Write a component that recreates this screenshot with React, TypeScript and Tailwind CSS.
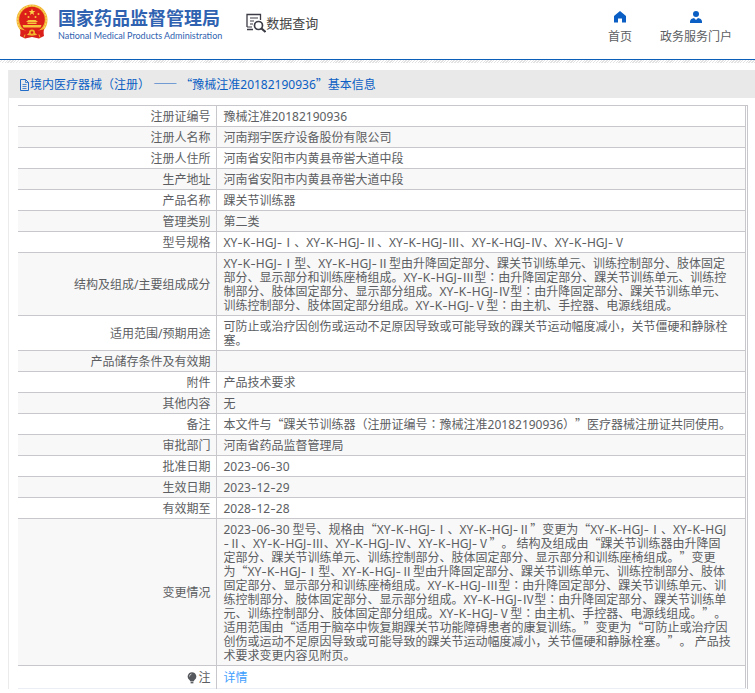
import { Fragment } from "react";
import type { ReactNode } from "react";

const structure = `XY-K-HGJ-Ⅰ型、XY-K-HGJ-Ⅱ型由升降固定部分、踝关节训练单元、训练控制部分、肢体固定
部分、显示部分和训练座椅组成。XY-K-HGJ-Ⅲ型：由升降固定部分、踝关节训练单元、训练控
制部分、肢体固定部分、显示部分组成。XY-K-HGJ-Ⅳ型：由升降固定部分、踝关节训练单元、
训练控制部分、肢体固定部分组成。XY-K-HGJ-Ⅴ型：由主机、手控器、电源线组成。`;

const changes = `2023-06-30 型号、规格由“XY-K-HGJ-Ⅰ、XY-K-HGJ-Ⅱ”变更为“XY-K-HGJ-Ⅰ、XY-K-HGJ
-Ⅱ、XY-K-HGJ-Ⅲ、XY-K-HGJ-Ⅳ、XY-K-HGJ-Ⅴ”。 结构及组成由“踝关节训练器由升降固
定部分、踝关节训练单元、训练控制部分、肢体固定部分、显示部分和训练座椅组成。”变更
为“XY-K-HGJ-Ⅰ型、XY-K-HGJ-Ⅱ型由升降固定部分、踝关节训练单元、训练控制部分、肢体
固定部分、显示部分和训练座椅组成。XY-K-HGJ-Ⅲ型：由升降固定部分、踝关节训练单元、训
练控制部分、肢体固定部分、显示部分组成。XY-K-HGJ-Ⅳ型：由升降固定部分、踝关节训练单
元、训练控制部分、肢体固定部分组成。XY-K-HGJ-Ⅴ型：由主机、手控器、电源线组成。”。
适用范围由“适用于脑卒中恢复期踝关节功能障碍患者的康复训练。”变更为“可防止或治疗因
创伤或运动不足原因导致或可能导致的踝关节运动幅度减小，关节僵硬和静脉栓塞。”。 产品技
术要求变更内容见附页。`;

const rows = [
  { label: "注册证编号", value: "豫械注准20182190936" },
  { label: "注册人名称", value: "河南翔宇医疗设备股份有限公司" },
  { label: "注册人住所", value: "河南省安阳市内黄县帝喾大道中段" },
  { label: "生产地址", value: "河南省安阳市内黄县帝喾大道中段" },
  { label: "产品名称", value: "踝关节训练器" },
  { label: "管理类别", value: "第二类" },
  { label: "型号规格", value: "XY-K-HGJ-Ⅰ、XY-K-HGJ-Ⅱ、XY-K-HGJ-Ⅲ、XY-K-HGJ-Ⅳ、XY-K-HGJ-Ⅴ" },
  { label: "结构及组成/主要组成成分", value: structure },
  {
    label: "适用范围/预期用途",
    value: "可防止或治疗因创伤或运动不足原因导致或可能导致的踝关节运动幅度减小，关节僵硬和静脉栓塞。",
  },
  { label: "产品储存条件及有效期", value: "" },
  { label: "附件", value: "产品技术要求" },
  { label: "其他内容", value: "无" },
  { label: "备注", value: "本文件与“踝关节训练器（注册证编号：豫械注准20182190936）”医疗器械注册证共同使用。" },
  { label: "审批部门", value: "河南省药品监督管理局" },
  { label: "批准日期", value: "2023-06-30" },
  { label: "生效日期", value: "2023-12-29" },
  { label: "有效期至", value: "2028-12-28" },
  { label: "变更情况", value: changes },
];

function Glyph({ text }: { text: string }) {
  if (text === "-") {
    return <span className="font-['Inter',sans-serif] leading-none">{text}</span>;
  }
  // zh-Hant centres the colon in its box
  if (text === "：") {
    return <span lang="zh-Hant" className="font-['Noto_Sans_CJK_TC',sans-serif] leading-none">{text}</span>;
  }
  return <span className="font-['Noto_Sans_CJK_SC',sans-serif] leading-none">{text}</span>;
}

// Quotes, dashes and roman numerals take the full-width CJK glyphs
function Mixed({ text }: { text: string }) {
  return (
    <>
      {text.split(/([“”—Ⅰ-Ⅴ]+|：|-)/).map((part, i) =>
        i % 2 ? <Glyph key={i} text={part} /> : <Fragment key={i}>{part}</Fragment>
      )}
    </>
  );
}

function Emblem() {
  return (
    <svg viewBox="0 0 32 36" className="h-9 w-8 shrink-0" aria-hidden="true">
      <path d="M5 25 L4 32 L9 34.500 L16 33 L23 34.500 L28 32 L27 25Z" fill="#d8201c" />
      <circle cx="16" cy="16" r="15.500" fill="#f2b632" />
      <circle cx="16" cy="16" r="14.300" fill="none" stroke="#fbe07a" strokeWidth=".8" strokeDasharray="2 1.200" />
      <circle cx="16" cy="15.500" r="12.800" fill="#dd1f1a" />
      <path d="M16 4.600l.9 2.300 2.400.1-1.900 1.500.7 2.400-2.100-1.400-2.100 1.400.7-2.400-1.900-1.500 2.400-.1z" fill="#fbd34a" />
      <g fill="#f8c63c">
        <circle cx="9.500" cy="10" r="1" />
        <circle cx="22.500" cy="10" r="1" />
        <circle cx="12.500" cy="13" r="1" />
        <circle cx="19.500" cy="13" r="1" />
        <path d="M10 18l2.500-2h7l2.500 2zM11.500 18.500h9v1.500h-9zM6.500 21h19l-1 2.500h-17z" />
      </g>
      <path d="M4 25c4 1.500 8 2 12 2s8-.5 12-2l-1 5-5 1.500-3-2.500h-6l-3 2.500-5-1.500z" fill="#dd1f1a" />
      <circle cx="16" cy="28.500" r="3" fill="#f0b429" />
      <circle cx="16" cy="28.500" r="1.300" fill="#dd1f1a" />
      <path d="M9 30.500l-1 3M23 30.500l1 3" stroke="#f0b429" strokeWidth="1" />
    </svg>
  );
}

function QueryIcon() {
  return (
    <svg viewBox="0 0 20 20" className="size-5 shrink-0" fill="none" stroke="#3c3c46" aria-hidden="true">
      <path d="M14.500 7V1.500H1V5M1 5v9M1 16.500h6" strokeWidth="1.300" />
      <path d="M1 14h5M4 5h8M4 8h4M4 11h3" strokeWidth="1.200" />
      <circle cx="12.500" cy="12.500" r="4" strokeWidth="1.700" />
      <path d="M15.500 15.500l4 3.500" strokeWidth="2.200" />
    </svg>
  );
}

function HomeIcon() {
  return (
    <svg viewBox="0 0 12 12" className="size-3" fill="#0b5fc4" aria-hidden="true">
      <path d="M6 0L0 5v6.500h4V7.500h4v4h4V5z" />
    </svg>
  );
}

function UserIcon() {
  return (
    <svg viewBox="0 0 12 12" className="size-3" fill="#0b5fc4" aria-hidden="true">
      <circle cx="6" cy="3" r="3" />
      <path d="M0 12V10.500C0 8.500 2 7.300 4 7l2 2 2-2c2 .3 4 1.500 4 3.500V12z" />
    </svg>
  );
}

function DocIcon() {
  return (
    <svg viewBox="0 0 11 12" className="h-3 w-[11px]" fill="none" stroke="#0b5fc4" aria-hidden="true">
      <path d="M1.500.5h5l3 3v8h-8z" strokeWidth=".9" />
      <path d="M6.500.5v3h3M3.500 5.500h4M3.500 7.500h4M3.500 9.500h4" strokeWidth=".7" />
    </svg>
  );
}

function BulbIcon() {
  return (
    <svg viewBox="0 0 10 12" className="h-3 w-[10px]" aria-hidden="true">
      <path d="M5 .3a4.300 4.300 0 0 0-2.500 7.800l1 1.400h3l1-1.400A4.300 4.300 0 0 0 5 .3z" fill="#55585c" />
      <path d="M3.600 10.700h2.800" stroke="#55585c" strokeWidth="1.300" />
      <path d="M2.500 4.500A2.500 2.500 0 0 1 4.500 2" stroke="#ddd" strokeWidth=".8" fill="none" />
    </svg>
  );
}

function NavLink({ icon, children }: { icon: ReactNode; children: ReactNode }) {
  return (
    <a href="#" className="flex flex-col items-center gap-1.5">
      {icon}
      <span className="leading-4">{children}</span>
    </a>
  );
}

export default function App() {
  return (
    <div
      lang="zh-CN"
      className="bg-white font-['Noto_Sans','Noto_Sans_CJK_SC',sans-serif] text-xs text-[#5c5e62] [text-spacing-trim:space-all]"
    >
      <header className="flex h-[60px] items-start border-b border-[#0b5fb8] pr-[23px] pl-4">
        <a href="#" className="flex items-start gap-[10px] pt-1 text-[#2f62b0]">
          <Emblem />
          <span className="flex flex-col gap-0.5 pt-1 whitespace-nowrap">
            <span className="text-lg leading-5 font-bold">国家药品监督管理局</span>
            <span className="font-['Lato',sans-serif] text-[9px] leading-3">
              National Medical Products Administration
            </span>
          </span>
        </a>
        <h1 className="ml-6 flex items-center pt-[13px] text-[13px] leading-5 whitespace-nowrap text-[#444]">
          <QueryIcon />
          数据查询
        </h1>
        <nav className="ml-auto flex gap-7 pt-[11px]">
          <NavLink icon={<HomeIcon />}>首页</NavLink>
          <NavLink icon={<UserIcon />}>政务服务门户</NavLink>
        </nav>
      </header>
      <div className="h-[3px] bg-[repeating-linear-gradient(135deg,#fff_0_1px,#e2e2e2_1px_2px)]" />

      <main className="mt-[7px] ml-2 border-l border-[#ebebeb]">
        <h2 className="flex h-7 items-center bg-[#e9e9e9] pt-0.5 pl-[10px] text-[#0b5fc4]">
          <DocIcon />
          <span>
            <Mixed text="境内医疗器械（注册） —— “豫械注准20182190936”基本信息" />
          </span>
        </h2>
        <div className="mt-[7px] mr-[7px] ml-[9px] border-t border-r border-[#c8c8cc] pr-px">
          <table className="w-full table-fixed border-collapse border-r border-b border-r-[#c8c8cc] border-b-[#ebeef5] leading-[14px]">
            <colgroup>
              <col className="w-[198px]" />
              <col />
            </colgroup>
            <tbody>
              {rows.map((row) => (
                <tr key={row.label} className="border-b border-[#c8c8cc] even:bg-[#f8f8f8]">
                  <th scope="row" className="border-r border-[#c8c8cc] pt-1 pr-[5px] pb-0.5 text-right font-normal">
                    {row.label}
                  </th>
                  <td className="pt-1 pr-[5px] pb-0.5 pl-[7px] break-all whitespace-pre-line">
                    <Mixed text={row.value} />
                  </td>
                </tr>
              ))}
              <tr>
                <th scope="row" className="border-r border-[#c8c8cc] pt-[5px] pr-[5px] pb-[3px] text-right font-normal">
                  <span className="flex items-center justify-end gap-px">
                    <BulbIcon />注
                  </span>
                </th>
                <td className="pt-[5px] pb-[3px] pl-[7px]">
                  <a href="#" className="text-[#409eff]">详情</a>
                </td>
              </tr>
            </tbody>
          </table>
        </div>
      </main>
    </div>
  );
}
